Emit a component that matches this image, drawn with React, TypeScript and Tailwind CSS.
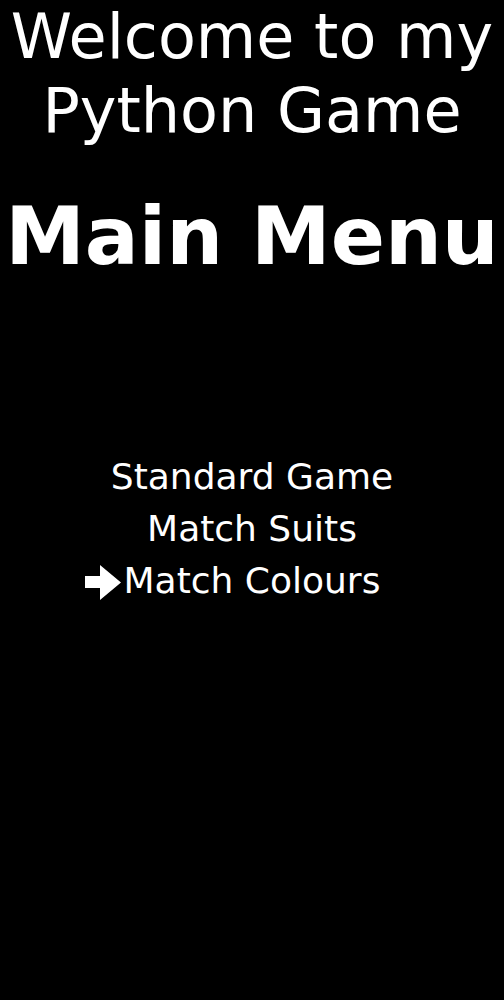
export default function App() {
  return (
    <div className="min-h-[1000px] w-full bg-black text-white text-center" style={{ fontFamily: '"DejaVu Sans", sans-serif' }}>
      <h1 className="text-[62px] leading-[74px] font-normal">Welcome to my<br />Python Game</h1>
      <h2 className="mt-[42px] text-[80px] leading-[93px] font-bold">Main Menu</h2>
      <ul className="mt-[168px] text-[36px] leading-[52px]">
        <li>Standard Game</li>
        <li>Match Suits</li>
        <li>
          <span className="relative inline-block">
            <svg className="absolute right-full top-[10px] mr-[3px]" width="36" height="36" viewBox="0 0 36 36">
              <polygon points="0,11 15,11 15,0 36,17.5 15,35 15,23 0,23" fill="white" />
            </svg>
            Match Colours
          </span>
        </li>
      </ul>
    </div>
  );
}
